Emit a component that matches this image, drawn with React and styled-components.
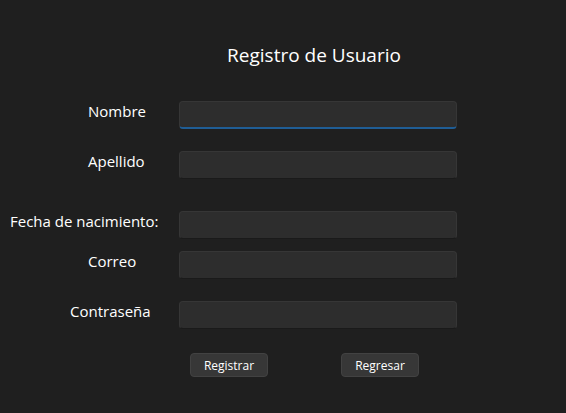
import React from "react";
import styled, { createGlobalStyle } from "styled-components";

const GlobalStyle = createGlobalStyle`
  html, body {
    margin: 0;
    padding: 0;
    background: #1f1f1f;
  }
  body {
    font-family: "Segoe UI", "Open Sans", "Noto Sans", sans-serif;
    color: #ffffff;
  }
`;

const Window = styled.div`
  width: 566px;
  height: 413px;
  background: #1f1f1f;
  box-sizing: border-box;
  padding-top: 42px;
  display: flex;
  flex-direction: column;
`;

const Title = styled.h1`
  margin: 0 0 0 175px;
  width: 278px;
  font-size: 19px;
  line-height: 27px;
  font-weight: 400;
  text-align: center;
  color: #ffffff;
`;

const Form = styled.div`
  display: flex;
  flex-direction: column;
  margin-top: 32px;
`;

const Row = styled.div`
  display: flex;
  align-items: flex-start;
  margin-top: ${({ $gap }) => $gap}px;
`;

const Label = styled.label`
  width: 179px;
  box-sizing: border-box;
  padding-left: ${({ $indent }) => $indent}px;
  font-size: 15px;
  line-height: 20px;
  white-space: nowrap;
  color: #ffffff;
`;

const Input = styled.input`
  width: 278px;
  height: 28px;
  box-sizing: border-box;
  background: #2d2d2d;
  border: 1px solid #363636;
  border-bottom: ${({ $focused }) =>
    $focused ? "2px solid #1f5d95" : "1px solid #1a1a1a"};
  border-radius: 4px;
  outline: none;
  color: #ffffff;
  font-family: inherit;
  font-size: 14px;
  padding: 0 10px;
`;

const Buttons = styled.div`
  display: flex;
  gap: 73px;
  padding-left: 190px;
  margin-top: 24px;
`;

const Button = styled.button`
  width: 78px;
  height: 24px;
  box-sizing: border-box;
  background: #373737;
  border: 1px solid #424242;
  border-radius: 4px;
  color: #ffffff;
  font-family: inherit;
  font-size: 12px;
  padding: 0;
`;

const fields = [
  { label: "Nombre", indent: 88, gap: 0, focused: true },
  { label: "Apellido", indent: 88, gap: 22 },
  { label: "Fecha de nacimiento:", indent: 10, gap: 32 },
  { label: "Correo", indent: 88, gap: 12 },
  { label: "Contraseña", indent: 70, gap: 22 },
];

const App = () => {
  return (
    <>
      <GlobalStyle />
      <Window>
        <Title>Registro de Usuario</Title>
        <Form>
          {fields.map((f) => (
            <Row key={f.label} $gap={f.gap}>
              <Label $indent={f.indent}>{f.label}</Label>
              <Input $focused={f.focused} type={f.label === "Contraseña" ? "password" : "text"} />
            </Row>
          ))}
        </Form>
        <Buttons>
          <Button>Registrar</Button>
          <Button>Regresar</Button>
        </Buttons>
      </Window>
    </>
  );
};

export default App;
